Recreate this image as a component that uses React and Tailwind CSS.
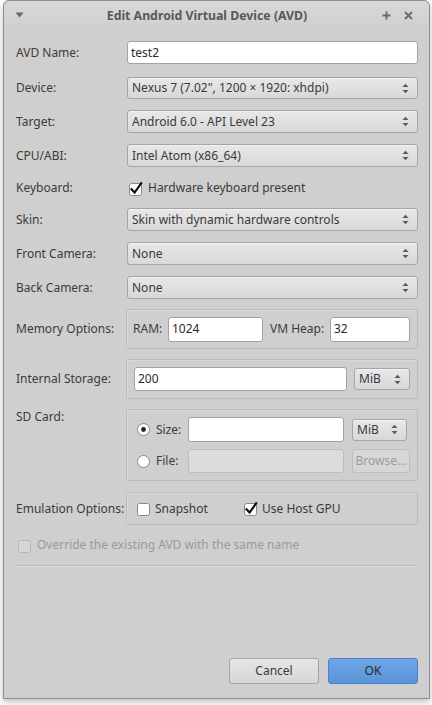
import React from 'react';

const font = { fontFamily: '"Noto Sans", "Open Sans", sans-serif' };

function Arrows() {
    return (
        <svg width="7" height="11" viewBox="0 0 7 11" className="shrink-0">
            <path d="M0.5 4 L3.5 0.8 L6.5 4 Z" fill="#5a5a5a" />
            <path d="M0.5 7 L3.5 10.2 L6.5 7 Z" fill="#5a5a5a" />
        </svg>
    );
}

function Combo({ children, className = '' }) {
    return (
        <div
            className={`flex items-center justify-between pl-[4px] pr-[8px] border border-[#a6a6a6] rounded-[3px] bg-gradient-to-b from-[#e8e8e8] to-[#d8d8d8] text-[#3a3a3a] shadow-[inset_0_1px_0_#f2f2f2] ${className}`}
        >
            <span className="whitespace-nowrap">{children}</span>
            <Arrows />
        </div>
    );
}

function Input({ value = '', className = '', disabled = false }) {
    return (
        <div
            className={`flex items-center pl-[3px] border rounded-[3px] text-[#2a2a2a] ${
                disabled ? 'bg-[#dcdcdc] border-[#bdbdbd]' : 'bg-white border-[#a3a3a3]'
            } ${className}`}
        >
            {value}
        </div>
    );
}

function Check({ checked, disabled }) {
    return (
        <svg width="15" height="15" viewBox="0 0 15 15" className="shrink-0">
            <rect
                x="0.5"
                y="2.5"
                width="12"
                height="12"
                rx="2"
                fill={disabled ? '#d6d6d6' : '#ffffff'}
                stroke={disabled ? '#b8b8b8' : '#8a8a8a'}
            />
            {checked && (
                <path d="M2.5 8.2 L5.6 11.6 L12.2 2.2" fill="none" stroke="#111" strokeWidth="2.2" strokeLinecap="square" />
            )}
        </svg>
    );
}

function Radio({ checked }) {
    return (
        <svg width="13" height="13" viewBox="0 0 13 13" className="shrink-0">
            <circle cx="6.5" cy="6.5" r="6" fill="#fff" stroke="#8a8a8a" />
            {checked && <circle cx="6.5" cy="6.5" r="2.4" fill="#222" />}
        </svg>
    );
}

function Row({ label, mt, h = 'h-[23px]', children }) {
    return (
        <div className={`flex items-center ${mt} ${h}`}>
            <div className="w-[111px] shrink-0 text-[#3f3a36] whitespace-nowrap">{label}</div>
            <div className="flex-1 min-w-0 h-full flex items-center">{children}</div>
        </div>
    );
}

function Group({ label, mt, h, labelTop = false, children }) {
    return (
        <div className={`flex ${labelTop ? 'items-start' : 'items-center'} ${mt}`}>
            <div className={`w-[110px] shrink-0 text-[#3f3a36] whitespace-nowrap ${labelTop ? 'pt-[0px]' : ''}`}>{label}</div>
            <div className={`flex-1 min-w-0 ${h} border border-[#bcbcbc] rounded-[2px] shadow-[inset_1px_1px_0_#d8d8d8]`}>
                {children}
            </div>
        </div>
    );
}

export default function App() {
    return (
        <div className="w-[432px] h-[705px] bg-white overflow-hidden text-[12px] leading-[16px]" style={font}>
            <div className="ml-[3px] w-[427px] h-[699px] flex flex-col bg-[#cfcfcf] border border-[#8e8e8e] rounded-t-[6px] shadow-[0_3px_6px_rgba(0,0,0,0.25)]">
                {/* Title bar */}
                <div className="h-[29px] shrink-0 flex items-center px-[11px] rounded-t-[6px] bg-gradient-to-b from-[#d8d8d8] to-[#cfcfcf]">
                    <svg width="9" height="6" viewBox="0 0 9 6" className="mt-[-1px]">
                        <path d="M0.5 0.5 L8.5 0.5 L4.5 5.5 Z" fill="#6a6a6a" />
                    </svg>
                    <div className="flex-1 text-center font-bold text-[12.3px] text-[#585858] pl-[8px]">Edit Android Virtual Device (AVD)</div>
                    <div className="flex items-center gap-[13px] pr-[5px]">
                        <svg width="9" height="9" viewBox="0 0 9 9">
                            <path d="M4.5 0.5 V8.5 M0.5 4.5 H8.5" stroke="#6a6a6a" strokeWidth="1.8" />
                        </svg>
                        <svg width="9" height="9" viewBox="0 0 9 9">
                            <path d="M1 1 L8 8 M8 1 L1 8" stroke="#6a6a6a" strokeWidth="1.8" />
                        </svg>
                    </div>
                </div>

                {/* Body */}
                <div className="flex-1 flex flex-col pl-[12px] pr-[11px] pb-[14px]">
                    <Row label="AVD Name:" mt="mt-[11px]">
                        <Input value="test2" className="w-full h-[23px]" />
                    </Row>
                    <Row label="Device:" mt="mt-[13px]" h="h-[22px]">
                        <Combo className="w-full h-[22px]">Nexus 7 (7.02", 1200 × 1920: xhdpi)</Combo>
                    </Row>
                    <Row label="Target:" mt="mt-[11px]">
                        <Combo className="w-full h-[23px]">Android 6.0 - API Level 23</Combo>
                    </Row>
                    <Row label="CPU/ABI:" mt="mt-[11px]">
                        <Combo className="w-full h-[23px]">Intel Atom (x86_64)</Combo>
                    </Row>
                    <Row label="Keyboard:" mt="mt-[11px]" h="h-[20px]">
                        <div className="flex items-center gap-[4px] pl-[2px] text-[#3a3a3a]">
                            <Check checked />
                            <span>Hardware keyboard present</span>
                        </div>
                    </Row>
                    <Row label="Skin:" mt="mt-[10px]">
                        <Combo className="w-full h-[23px]">Skin with dynamic hardware controls</Combo>
                    </Row>
                    <Row label="Front Camera:" mt="mt-[11px]">
                        <Combo className="w-full h-[23px]">None</Combo>
                    </Row>
                    <Row label="Back Camera:" mt="mt-[11px]">
                        <Combo className="w-full h-[23px]">None</Combo>
                    </Row>

                    <Group label="Memory Options:" mt="mt-[10px]" h="h-[40px]">
                        <div className="h-full flex items-center pl-[6px] pr-[7px] text-[#3c3c3c]">
                            <span className="w-[35px]">RAM:</span>
                            <Input value="1024" className="w-[95px] h-[25px]" />
                            <span className="ml-[7px] w-[60px]">VM Heap:</span>
                            <Input value="32" className="flex-1 h-[25px]" />
                        </div>
                    </Group>

                    <Group label="Internal Storage:" mt="mt-[10px]" h="h-[40px]">
                        <div className="h-full flex items-center pl-[7px] pr-[7px]">
                            <Input value="200" className="w-[213px] h-[24px]" />
                            <Combo className="ml-[7px] flex-1 h-[22px]">MiB</Combo>
                        </div>
                    </Group>

                    <Group label="SD Card:" mt="mt-[10px]" h="h-[72px]" labelTop>
                        <div className="h-full flex flex-col justify-center gap-[7px] pl-[10px] pr-[7px] text-[#3c3c3c]">
                            <div className="flex items-center h-[25px]">
                                <Radio checked />
                                <span className="ml-[6px] w-[32px]">Size:</span>
                                <Input className="w-[156px] h-[25px]" />
                                <Combo className="ml-[8px] w-[55px] h-[22px]">MiB</Combo>
                            </div>
                            <div className="flex items-center h-[24px]">
                                <Radio />
                                <span className="ml-[6px] w-[32px]">File:</span>
                                <Input className="w-[156px] h-[24px]" disabled />
                                <div className="ml-[8px] flex-1 h-[24px] flex items-center justify-center border border-[#bdbdbd] rounded-[3px] bg-[#d6d6d6] text-[#9c9c9c]">
                                    Browse...
                                </div>
                            </div>
                        </div>
                    </Group>

                    <Group label="Emulation Options:" mt="mt-[11px]" h="h-[33px]">
                        <div className="h-full flex items-center pl-[10px] text-[#3a3a3a]">
                            <Check />
                            <span className="ml-[3px] w-[89px]">Snapshot</span>
                            <Check checked />
                            <span className="ml-[3px]">Use Host GPU</span>
                        </div>
                    </Group>

                    <div className="mt-[12px] h-[16px] flex items-center pl-[2px] text-[#9a9a9a]">
                        <Check disabled />
                        <span className="ml-[4px]">Override the existing AVD with the same name</span>
                    </div>

                    <div className="mt-[12px] h-px bg-[#bababa] shadow-[0_1px_0_#dedede]" />

                    <div className="flex-1" />

                    <div className="flex justify-end gap-[9px]">
                        <div className="w-[90px] h-[26px] flex items-center justify-center border border-[#a4a4a4] rounded-[3px] bg-gradient-to-b from-[#e6e6e6] to-[#d6d6d6] text-[#3a3a3a]">
                            Cancel
                        </div>
                        <div className="w-[90px] h-[26px] flex items-center justify-center border border-[#4f82c4] rounded-[3px] bg-gradient-to-b from-[#6ea6e6] to-[#5a94d8] text-[#2a2a2a]">
                            OK
                        </div>
                    </div>
                </div>
            </div>
        </div>
    );
}
